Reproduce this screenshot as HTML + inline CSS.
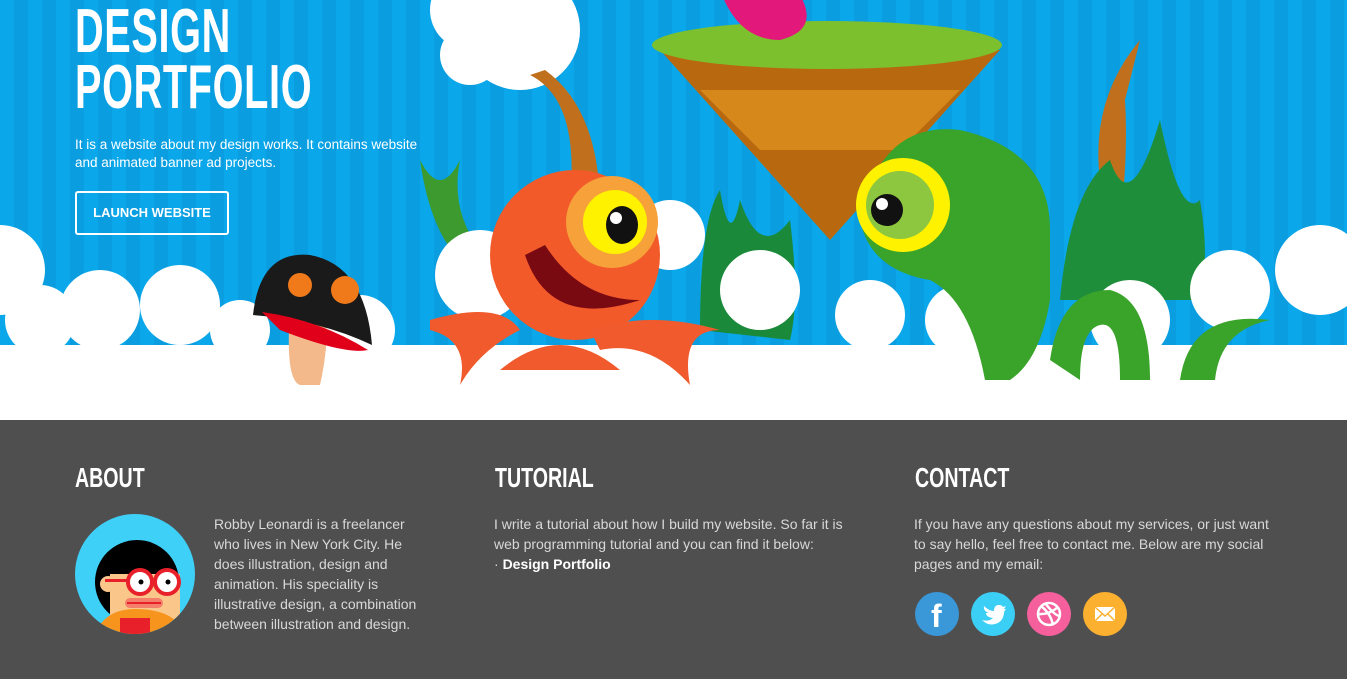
<!DOCTYPE html>
<html><head><meta charset="utf-8"><style>
*{margin:0;padding:0;box-sizing:border-box}
body{width:1347px;height:679px;overflow:hidden;font-family:"Liberation Sans",sans-serif;background:#4f4f4f}
#hero{position:absolute;left:0;top:0;width:1347px;height:420px;background:repeating-linear-gradient(90deg,#0aa7ea 0 14px,#0a9ddf 14px 28px);overflow:hidden}
h1{position:absolute;left:75px;top:4px;color:#fff;font-size:62px;line-height:56px;font-weight:bold;transform:scaleX(.64);transform-origin:0 0;letter-spacing:1px}
.intro{position:absolute;left:75px;top:136px;color:#fff;font-size:13.5px;line-height:18px;width:362px}
.btn{position:absolute;left:75px;top:191px;width:154px;height:44px;border:2px solid #fff;border-radius:3px;color:#fff;font-size:13px;font-weight:bold;text-align:center;line-height:40px}
h2{position:absolute;top:462px;color:#fff;font-size:28px;font-weight:bold;transform:scaleX(.7);transform-origin:0 0}
.t{position:absolute;color:#d8d8d8;font-size:14px;line-height:20px}
.s{position:absolute;top:592px;width:44px;height:44px;border-radius:50%}
</style></head><body>
<div id="hero">
<svg width="1347" height="420" style="position:absolute;left:0;top:0">
<g fill="#fff"><circle cx="520" cy="30" r="60"/><circle cx="470" cy="55" r="30"/><circle cx="470" cy="10" r="40"/></g>
<polygon points="660,50 1000,50 830,240" fill="#b8690f"/>
<polygon points="700,90 960,90 900,150 760,150" fill="#d6891a"/>
<ellipse cx="827" cy="45" rx="175" ry="24" fill="#7cc02e"/>
<path d="M722 -5 Q740 40 780 40 Q820 30 800 -5Z" fill="#e2187a"/>
<path d="M530 75 Q580 100 570 200 L600 210 Q600 110 545 70Z" fill="#c0701c"/>
<path d="M1140 40 Q1090 100 1100 180 L1070 280 L1110 290 Q1130 180 1125 100Z" fill="#c0701c"/>
<path d="M420 160 Q430 230 460 260 L480 250 Q450 210 460 160 Q440 200 420 160Z" fill="#3c9a2f"/>
<path d="M700 330 Q700 220 720 190 Q730 250 740 200 Q760 260 790 220 Q800 300 790 340Z" fill="#1a8a3a"/>
<path d="M1060 300 Q1070 190 1110 160 Q1130 220 1160 120 Q1180 220 1200 200 Q1210 260 1200 300Z" fill="#1f8e3a"/>
<g fill="#fff">
<rect x="0" y="345" width="1347" height="75"/>
<circle cx="0" cy="270" r="45"/><circle cx="40" cy="320" r="35"/><circle cx="100" cy="310" r="40"/><circle cx="180" cy="305" r="40"/><circle cx="240" cy="330" r="30"/>
<circle cx="360" cy="330" r="35"/><circle cx="480" cy="275" r="45"/><circle cx="670" cy="235" r="35"/><circle cx="760" cy="290" r="40"/>
<circle cx="870" cy="315" r="35"/><circle cx="960" cy="320" r="35"/><circle cx="1130" cy="320" r="40"/><circle cx="1230" cy="290" r="40"/><circle cx="1320" cy="270" r="45"/>
</g>
<path d="M290 310 Q285 380 300 385 L320 385 Q330 340 325 310Z" fill="#f3b98a"/>
<path d="M253 315 Q260 250 310 255 Q365 265 372 345 Q320 320 253 315Z" fill="#1a1a1a"/>
<path d="M262 312 Q320 320 368 350 Q345 355 280 330Z" fill="#e0001a"/>
<circle cx="300" cy="285" r="12" fill="#f07a1a"/><circle cx="345" cy="290" r="14" fill="#f07a1a"/>
<circle cx="575" cy="255" r="85" fill="#f25a2a"/>
<path d="M430 320 Q500 300 520 330 Q480 350 460 385 Q470 340 430 330Z M590 330 Q650 310 720 330 Q680 330 690 385 Q650 340 600 350Z" fill="#f05a2c"/>
<path d="M500 370 Q560 320 620 370 Z" fill="#f05a2c"/>
<circle cx="612" cy="222" r="46" fill="#f7a13b"/><circle cx="615" cy="222" r="32" fill="#fff200"/>
<ellipse cx="622" cy="225" rx="16" ry="19" fill="#111"/><circle cx="616" cy="218" r="6" fill="#fff"/>
<path d="M525 255 Q550 330 640 300 Q580 300 545 245Z" fill="#7a0a12"/>
<path d="M860 220 Q880 120 960 130 Q1050 150 1050 230 L1050 300 Q1040 360 1010 380 L985 380 Q970 300 930 280 Q870 270 860 220Z" fill="#3aa32a"/>
<path d="M1050 360 Q1060 290 1110 290 Q1150 300 1150 380 L1120 380 Q1120 320 1100 325 Q1080 330 1080 380Z M1180 380 Q1190 310 1270 320 Q1220 330 1215 380Z" fill="#3aa32a"/>
<circle cx="903" cy="205" r="47" fill="#fff200"/><circle cx="900" cy="205" r="34" fill="#8dc63f"/>
<circle cx="887" cy="210" r="16" fill="#111"/><circle cx="882" cy="204" r="6" fill="#fff"/>
</svg>
<h1>DESIGN<br>PORTFOLIO</h1>
<div class="intro">It is a website about my design works. It contains website and animated banner ad projects.</div>
<div class="btn">LAUNCH WEBSITE</div>
</div>
<h2 style="left:75px">ABOUT</h2>
<h2 style="left:495px">TUTORIAL</h2>
<h2 style="left:915px">CONTACT</h2>
<svg width="120" height="120" style="position:absolute;left:75px;top:514px">
<defs><clipPath id="c"><circle cx="60" cy="60" r="60"/></clipPath></defs>
<g clip-path="url(#c)"><rect width="120" height="120" fill="#3fd0f7"/>
<circle cx="62" cy="68" r="42" fill="#000"/>
<rect x="35" y="60" width="70" height="45" fill="#fbc68a"/>
<circle cx="33" cy="70" r="8" fill="#fbc68a"/>
<path d="M20 120 Q30 95 60 95 Q100 95 110 120Z" fill="#f7941d"/>
<rect x="45" y="104" width="30" height="16" fill="#e8202a"/>
<circle cx="65" cy="68" r="12" fill="#fff" stroke="#e8202a" stroke-width="4"/><circle cx="92" cy="68" r="12" fill="#fff" stroke="#e8202a" stroke-width="4"/>
<circle cx="66" cy="68" r="2.5"/><circle cx="93" cy="68" r="2.5"/>
<rect x="30" y="65" width="24" height="3" fill="#e8202a"/>
<rect x="50" y="84" width="38" height="10" rx="5" fill="#f47f6a"/><rect x="52" y="88" width="34" height="2" fill="#e8202a"/>
</g></svg>
<div class="t" style="left:214px;top:514px;width:215px">Robby Leonardi is a freelancer who lives in New York City. He does illustration, design and animation. His speciality is illustrative design, a combination between illustration and design.</div>
<div class="t" style="left:494px;top:514px;width:360px">I write a tutorial about how I build my website. So far it is web programming tutorial and you can find it below:<br>· <b style="color:#fff">Design Portfolio</b></div>
<div class="t" style="left:914px;top:514px;width:370px">If you have any questions about my services, or just want to say hello, feel free to contact me. Below are my social pages and my email:</div>
<div class="s" style="left:915px;background:#3a97d8"><span style="position:absolute;left:16px;top:6px;color:#fff;font-size:32px;font-weight:bold">f</span></div>
<div class="s" style="left:971px;background:#3ccff5"><svg width="44" height="44"><path d="M11 28 Q18 30 22 26 Q15 25 15 21 Q17 21 18 21 Q12 19 13 14 Q18 19 23 19 Q23 13 28 13 Q31 13 32 15 L35 14 L33 17 L35 17 Q33 19 33 21 Q32 30 24 32 Q17 34 11 28Z" fill="#fff"/></svg></div>
<div class="s" style="left:1027px;background:#f45f9c"><svg width="44" height="44" fill="none" stroke="#fff" stroke-width="2.5"><circle cx="22" cy="22" r="11"/><path d="M14 14 Q24 22 26 33 M11 22 Q22 23 31 15 M18 11 Q28 24 33 24"/></svg></div>
<div class="s" style="left:1083px;background:#fbb030"><svg width="44" height="44"><rect x="12" y="15" width="20" height="14" fill="#fff"/><path d="M12 15 L22 24 L32 15 M12 29 L19 22 M32 29 L25 22" stroke="#fbb030" stroke-width="1.5" fill="none"/></svg></div>
</body></html>
